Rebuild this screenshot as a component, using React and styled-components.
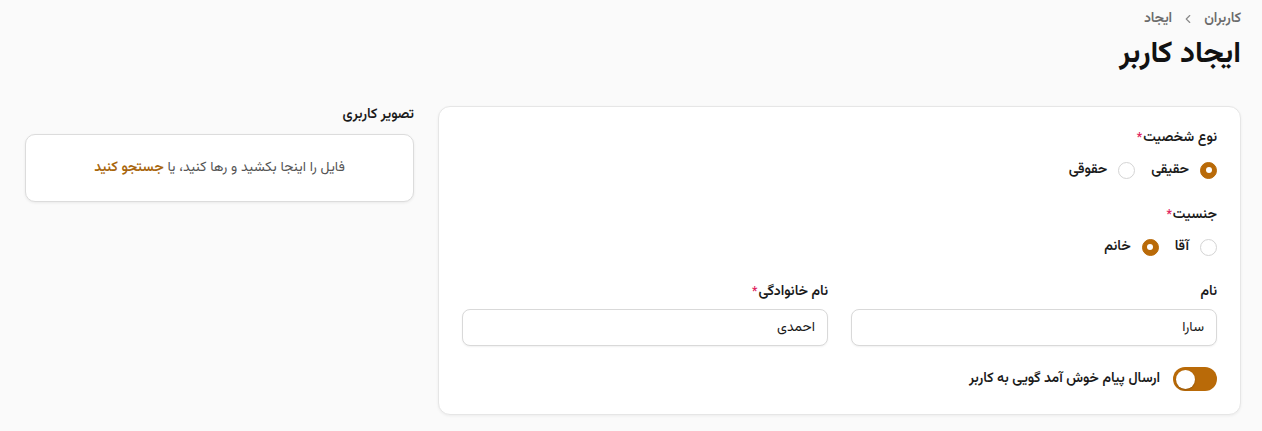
import React from "react";
import styled, { createGlobalStyle } from "styled-components";

const ACCENT = "#b96a08";

const Global = createGlobalStyle`
  html, body { margin: 0; padding: 0; background: #fafafa; }
  body { font-family: "Vazirmatn", "DejaVu Sans", "Noto Sans", sans-serif; color: #1a1a1a; }
  * { box-sizing: border-box; }
`;

const Page = styled.div`
  direction: rtl;
  padding: 9px 21px 16px 25px;
  min-height: 431px;
  background: #fafafa;
`;

const Breadcrumb = styled.nav`
  display: flex;
  align-items: center;
  gap: 9px;
  font-size: 14px;
  line-height: 20px;
  font-weight: 600;
  color: #6b6b6b;
`;

const Chevron = styled.svg`
  width: 14px;
  height: 14px;
  color: #8a8a8a;
`;

const Title = styled.h1`
  margin: 6px 0 31px;
  font-size: 30px;
  line-height: 40px;
  font-weight: 700;
  color: #111;
`;

const Layout = styled.div`
  display: grid;
  grid-template-columns: 803px 1fr;
  gap: 24px;
  align-items: start;
`;

const Card = styled.section`
  background: #fff;
  border: 1px solid #e6e6e6;
  border-radius: 12px;
  box-shadow: 0 1px 3px rgba(0, 0, 0, 0.06);
  padding: 21px 23px 23px;
  display: flex;
  flex-direction: column;
  gap: 23px;
`;

const Field = styled.div`
  display: flex;
  flex-direction: column;
  gap: ${(p) => p.$gap || 10}px;
`;

const Label = styled.label`
  font-size: 14px;
  line-height: 20px;
  font-weight: 600;
  color: #1a1a1a;
`;

const Req = styled.span`
  color: #e0245e;
  font-size: 12px;
  vertical-align: top;
  margin-right: 1px;
`;

const RadioRow = styled.div`
  display: flex;
  align-items: center;
  gap: 16px;
  height: 24px;
`;

const RadioOption = styled.span`
  display: inline-flex;
  align-items: center;
  gap: 11px;
  font-size: 14px;
  font-weight: 600;
  color: #1a1a1a;
`;

const RadioCircle = styled.span`
  width: 17px;
  height: 17px;
  border-radius: 50%;
  flex: none;
  background: ${(p) => (p.$checked ? ACCENT : "#fff")};
  border: 1px solid ${(p) => (p.$checked ? ACCENT : "#d4d4d4")};
  display: flex;
  align-items: center;
  justify-content: center;
  &::after {
    content: "";
    width: 6px;
    height: 6px;
    border-radius: 50%;
    background: #fff;
    display: ${(p) => (p.$checked ? "block" : "none")};
  }
`;

const Row = styled.div`
  display: grid;
  grid-template-columns: 1fr 1fr;
  gap: 23px;
`;

const Input = styled.div`
  height: 37px;
  border: 1px solid #d9d9d9;
  border-radius: 8px;
  background: #fff;
  box-shadow: 0 1px 2px rgba(0, 0, 0, 0.06);
  display: flex;
  align-items: center;
  padding: 0 12px;
  font-size: 14px;
  color: #1a1a1a;
`;

const SwitchRow = styled.div`
  display: flex;
  align-items: center;
  gap: 13px;
  font-size: 14px;
  font-weight: 600;
  margin-top: -2px;
`;

const Switch = styled.span`
  width: 44px;
  height: 24px;
  border-radius: 12px;
  background: ${ACCENT};
  display: flex;
  align-items: center;
  justify-content: flex-end;
  padding: 0 3px;
  flex: none;
`;

const Knob = styled.span`
  width: 19px;
  height: 19px;
  border-radius: 50%;
  background: #fff;
  box-shadow: 0 1px 2px rgba(0, 0, 0, 0.2);
`;

const Side = styled.div`
  display: flex;
  flex-direction: column;
  gap: 9px;
  margin-top: -1px;
`;

const Dropzone = styled.div`
  height: 68px;
  background: #fff;
  border: 1px solid #dcdcdc;
  border-radius: 10px;
  box-shadow: 0 1px 3px rgba(0, 0, 0, 0.07);
  display: flex;
  align-items: center;
  justify-content: center;
  font-size: 14px;
  color: #555;
`;

const Link = styled.span`
  color: #a8650c;
  font-weight: 600;
`;

function Radio({ checked, children }) {
  return (
    <RadioOption>
      <RadioCircle $checked={checked} />
      {children}
    </RadioOption>
  );
}

export default function App() {
  return (
    <>
      <Global />
      <Page>
        <Breadcrumb>
          <span>کاربران</span>
          <Chevron viewBox="0 0 24 24" fill="none" stroke="currentColor" strokeWidth="2" strokeLinecap="round" strokeLinejoin="round">
            <path d="M15 18l-6-6 6-6" />
          </Chevron>
          <span>ایجاد</span>
        </Breadcrumb>
        <Title>ایجاد کاربر</Title>
        <Layout>
          <Card>
            <Field>
              <Label>
                نوع شخصیت<Req>*</Req>
              </Label>
              <RadioRow>
                <Radio checked>حقیقی</Radio>
                <Radio>حقوقی</Radio>
              </RadioRow>
            </Field>
            <Field>
              <Label>
                جنسیت<Req>*</Req>
              </Label>
              <RadioRow>
                <Radio>آقا</Radio>
                <Radio checked>خانم</Radio>
              </RadioRow>
            </Field>
            <Row>
              <Field $gap={7}>
                <Label>نام</Label>
                <Input>سارا</Input>
              </Field>
              <Field $gap={7}>
                <Label>
                  نام خانوادگی<Req>*</Req>
                </Label>
                <Input>احمدی</Input>
              </Field>
            </Row>
            <SwitchRow>
              <Switch>
                <Knob />
              </Switch>
              <span>ارسال پیام خوش آمد گویی به کاربر</span>
            </SwitchRow>
          </Card>
          <Side>
            <Label>تصویر کاربری</Label>
            <Dropzone>
              <span>
                فایل را اینجا بکشید و رها کنید، یا <Link>جستجو کنید</Link>
              </span>
            </Dropzone>
          </Side>
        </Layout>
      </Page>
    </>
  );
}
